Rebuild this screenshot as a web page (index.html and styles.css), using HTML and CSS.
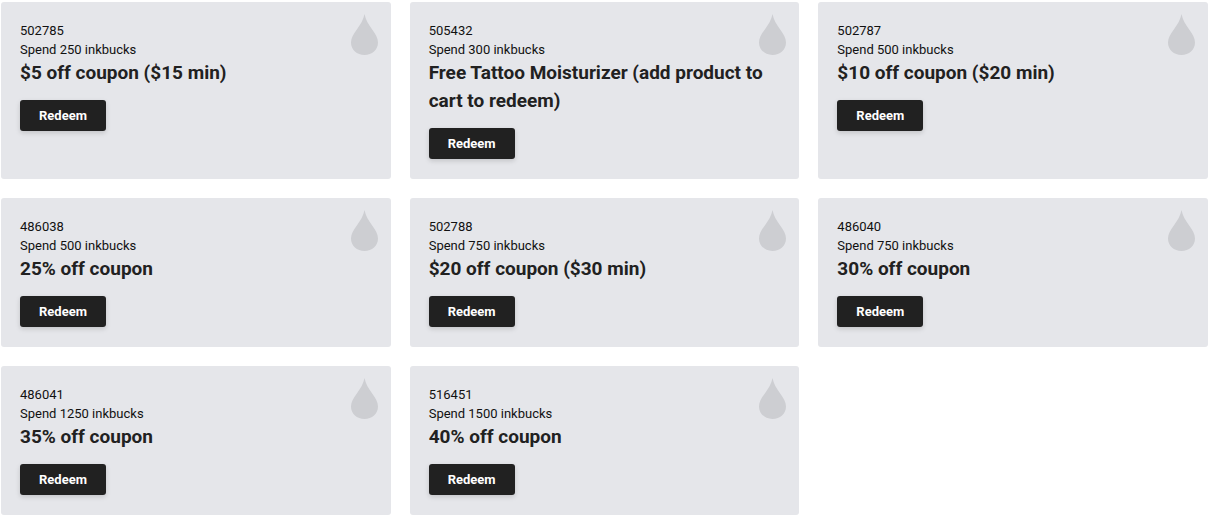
FILE: index.html
```
<!DOCTYPE html>
<html lang="en">
<head>
<meta charset="UTF-8">
<meta name="viewport" content="width=device-width, initial-scale=1.0">
<title>Inkbucks Rewards</title>
<link rel="stylesheet" href="styles.css">
</head>
<body>

<!-- ink drop shared by all the reward cards -->
<svg class="sprite" aria-hidden="true">
  <symbol id="drop" viewBox="0 0 27 41">
    <path d="M13.5 0C14.5 5.500 17.500 10.500 21 15.200C24.500 20 27 24 27 28.500C27 36 21 41 13.500 41S0 36 0 28.500C0 24 2.500 20 6 15.200C9.500 10.500 12.500 5.500 13.500 0Z"/>
  </symbol>
</svg>

<main class="rewards">
  <div class="reward">
    <svg class="drop" aria-hidden="true"><use href="#drop"/></svg>
    <p>502785</p>
    <p>Spend 250 inkbucks</p>
    <h2>$5 off coupon ($15 min)</h2>
    <button type="button">Redeem</button>
  </div>

  <div class="reward">
    <svg class="drop" aria-hidden="true"><use href="#drop"/></svg>
    <p>505432</p>
    <p>Spend 300 inkbucks</p>
    <h2>Free Tattoo Moisturizer (add product to cart to redeem)</h2>
    <button type="button">Redeem</button>
  </div>

  <div class="reward">
    <svg class="drop" aria-hidden="true"><use href="#drop"/></svg>
    <p>502787</p>
    <p>Spend 500 inkbucks</p>
    <h2>$10 off coupon ($20 min)</h2>
    <button type="button">Redeem</button>
  </div>

  <div class="reward">
    <svg class="drop" aria-hidden="true"><use href="#drop"/></svg>
    <p>486038</p>
    <p>Spend 500 inkbucks</p>
    <h2>25% off coupon</h2>
    <button type="button">Redeem</button>
  </div>

  <div class="reward">
    <svg class="drop" aria-hidden="true"><use href="#drop"/></svg>
    <p>502788</p>
    <p>Spend 750 inkbucks</p>
    <h2>$20 off coupon ($30 min)</h2>
    <button type="button">Redeem</button>
  </div>

  <div class="reward">
    <svg class="drop" aria-hidden="true"><use href="#drop"/></svg>
    <p>486040</p>
    <p>Spend 750 inkbucks</p>
    <h2>30% off coupon</h2>
    <button type="button">Redeem</button>
  </div>

  <div class="reward">
    <svg class="drop" aria-hidden="true"><use href="#drop"/></svg>
    <p>486041</p>
    <p>Spend 1250 inkbucks</p>
    <h2>35% off coupon</h2>
    <button type="button">Redeem</button>
  </div>

  <div class="reward">
    <svg class="drop" aria-hidden="true"><use href="#drop"/></svg>
    <p>516451</p>
    <p>Spend 1500 inkbucks</p>
    <h2>40% off coupon</h2>
    <button type="button">Redeem</button>
  </div>
</main>

</body>
</html>
```

FILE: styles.css
```
* {
  box-sizing: border-box;
}

body {
  margin: 0;
  background: #fff;
  color: #212121;
  font-family: Roboto, sans-serif;
  font-size: 13px;
  line-height: 19px;
}

.sprite {
  display: none;
}

.rewards {
  display: grid;
  grid-template-columns: repeat(3, 1fr);
  gap: 19px;
  padding: 2px 2px 2px 1px;
}

.reward {
  position: relative;
  padding: 19px 19px 20px;
  background: #e5e6ea;
  border-radius: 3px;
}

.reward p {
  margin: 0;
  color: #111;
}

.reward h2 {
  margin: 0 0 13px;
  font-size: 19px;
  font-weight: 700;
  line-height: 28px;
}

.reward button {
  display: block;
  height: 31px;
  padding: 0 19px;
  border: 0;
  border-radius: 3px;
  background: #212121;
  box-shadow: 0 2px 5px rgba(0, 0, 0, 0.15);
  color: #fff;
  font-family: inherit;
  font-size: 13px;
  font-weight: 700;
  cursor: pointer;
}

.reward button:hover {
  background: #424242;
}

/* sits in the card's top right corner */
.drop {
  position: absolute;
  top: 12px;
  right: 13px;
  width: 27px;
  height: 41px;
  fill: #cdced2;
}
```
